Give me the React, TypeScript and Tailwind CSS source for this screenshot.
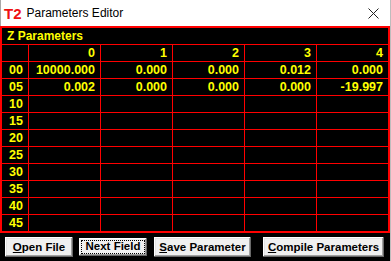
import React from 'react'

const COLS = ['0', '1', '2', '3', '4']

const ROWS: { label: string; values: string[] }[] = [
  { label: '00', values: ['10000.000', '0.000', '0.000', '0.012', '0.000'] },
  { label: '05', values: ['0.002', '0.000', '0.000', '0.000', '-19.997'] },
  { label: '10', values: ['', '', '', '', ''] },
  { label: '15', values: ['', '', '', '', ''] },
  { label: '20', values: ['', '', '', '', ''] },
  { label: '25', values: ['', '', '', '', ''] },
  { label: '30', values: ['', '', '', '', ''] },
  { label: '35', values: ['', '', '', '', ''] },
  { label: '40', values: ['', '', '', '', ''] },
  { label: '45', values: ['', '', '', '', ''] },
]

const cell = 'bg-black h-[16px] leading-[16px] text-[#ffff00] font-bold text-[12.5px]'

const Button = ({
  children,
  className = '',
  focused = false,
}: {
  children: React.ReactNode
  className?: string
  focused?: boolean
}) => (
  <button
    className={`h-[20px] bg-[#f0f0f0] text-black font-bold text-[11.5px] leading-[20px] flex items-stretch justify-center ${
      focused
        ? 'border border-black shadow-[inset_-1px_-1px_#696969,inset_1px_1px_#fff,inset_-2px_-2px_#a0a0a0]'
        : 'shadow-[inset_-1px_-1px_#696969,inset_1px_1px_#fff,inset_-2px_-2px_#a0a0a0,inset_2px_2px_#e3e3e3]'
    } ${className}`}
  >
    {focused ? (
      <span className="flex-1 m-[2px] border border-dotted border-black flex items-center justify-center leading-none">
        {children}
      </span>
    ) : (
      <span className="flex items-center">{children}</span>
    )}
  </button>
)

export default function App() {
  return (
    <div
      className="w-[391px] h-[261px] overflow-hidden bg-white flex flex-col border-r border-[#bdbdbd]"
      style={{ fontFamily: '"Liberation Sans", Arial, sans-serif' }}
    >
      {/* title bar */}
      <div className="h-[26px] shrink-0 flex items-center bg-white border-l border-[#a8a8a8]">
        <span className="ml-[3px] text-[15px] font-bold text-[#ee1111] leading-none">T2</span>
        <span className="ml-[5px] text-[12px] text-black leading-none">Parameters Editor</span>
        <svg className="ml-auto mr-[11px]" width="11" height="11" viewBox="0 0 11 11">
          <path d="M0.5 0.5 L10.5 10.5 M10.5 0.5 L0.5 10.5" stroke="#222" strokeWidth="1" />
        </svg>
      </div>

      <div className="flex-1 bg-black flex flex-col">
        {/* table */}
        <div className="w-[390px] border-2 border-[#ff0000] bg-[#ff0000] grid grid-cols-[26px_71px_71px_71px_71px_71px] gap-px">
          <div className={`${cell} col-span-6 pl-[5px] text-[12px]`}>Z Parameters</div>
          <div className={cell}></div>
          {COLS.map((c) => (
            <div key={c} className={`${cell} text-right pr-[5px]`}>
              {c}
            </div>
          ))}
          {ROWS.map((r) => (
            <React.Fragment key={r.label}>
              <div className={`${cell} pl-[7px]`}>{r.label}</div>
              {r.values.map((v, i) => (
                <div key={i} className={`${cell} text-right pr-[5px]`}>
                  {v}
                </div>
              ))}
            </React.Fragment>
          ))}
        </div>

        {/* buttons */}
        <div className="flex items-start pt-[4px] pl-[5px]">
          <Button className="w-[68px]">
            <span className="underline underline-offset-1">O</span>pen File
          </Button>
          <Button className="w-[70px] ml-[5px]" focused>
            Next Field
          </Button>
          <Button className="w-[97px] ml-[6px]">
            <span className="underline underline-offset-1">S</span>ave Parameter
          </Button>
          <Button className="w-[121px] ml-[12px]">
            <span className="underline underline-offset-1">C</span>ompile Parameters
          </Button>
        </div>
      </div>
    </div>
  )
}
